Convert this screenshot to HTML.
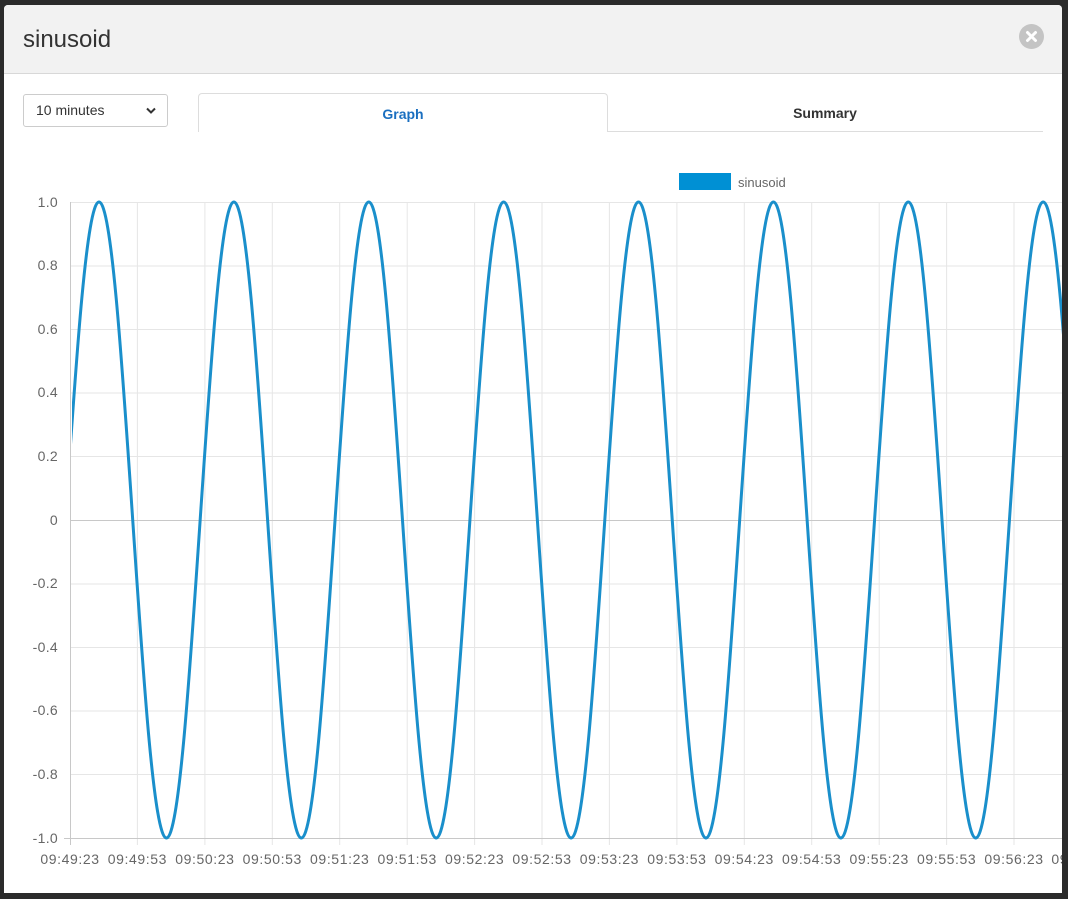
<!DOCTYPE html>
<html><head><meta charset="utf-8"><style>
html,body{margin:0;padding:0;width:1068px;height:899px;background:#2b2b2b;overflow:hidden;font-family:"Liberation Sans",sans-serif}
.modal{position:absolute;left:4px;top:5px;width:1058px;height:888px;background:#fff;border-radius:4px 4px 0 0;overflow:hidden}
.hdr{position:absolute;left:0;top:0;width:100%;height:68px;background:#f2f2f2;border-bottom:1px solid #d8d8d8}
.title{position:absolute;left:19px;top:21px;font-size:24px;color:#333}
.close{position:absolute;left:1015px;top:19px;width:25px;height:25px;border-radius:50%;background:#c4c4c4}
.sel{position:absolute;left:19px;top:89px;font-size:14px;color:#333;line-height:31px;padding-left:12px;box-sizing:border-box;width:145px;height:33px;border:1px solid #ccc;border-radius:3px}
.tab{position:absolute;top:88px;height:38px;font-size:14px;font-weight:bold;text-align:center;line-height:40px}
</style></head><body>
<div class="modal">
<div class="hdr"><div class="title">sinusoid</div>
<div class="close"><svg width="25" height="25"><path d="M8.5 8.5L16.5 16.5M16.5 8.5L8.5 16.5" stroke="#fff" stroke-width="3" stroke-linecap="round"/></svg></div></div>
<div class="sel">10 minutes<svg style="position:absolute;left:122px;top:12px" width="10" height="8"><path d="M1 1.5L5 5.5L9 1.5" stroke="#333" stroke-width="2" fill="none"/></svg></div>
<div class="tab" style="left:194px;width:408px;border:1px solid #ddd;border-bottom:none;border-radius:4px 4px 0 0;color:#1a6fc0;background:#fff">Graph</div>
<div class="tab" style="left:603px;width:436px;border-bottom:1px solid #ddd;color:#333">Summary</div>
</div>
<svg style="position:absolute;left:0;top:0" width="1068" height="899">
<defs><clipPath id="c"><rect x="72" y="190" width="990" height="660"/></clipPath></defs>
<g stroke="#e6e6e6" stroke-width="1">
<path d="M70 202.5H1062M70 266H1062M70 329.5H1062M70 393H1062M70 456.5H1062M70 584H1062M70 647.5H1062M70 711H1062M70 774.5H1062"/>
<path d="M137.4 202V845M204.9 202V845M272.3 202V845M339.7 202V845M407.2 202V845M474.6 202V845M542 202V845M609.4 202V845M676.9 202V845M744.3 202V845M811.7 202V845M879.2 202V845M946.6 202V845M1014 202V845"/>
</g>
<path d="M70 520.5H1062M64 838.5H1062M70.5 202V845" stroke="#c8c8c8" stroke-width="1"/>
<g fill="#666" font-size="14" text-anchor="end" letter-spacing="0.3">
<text x="58" y="207">1.0</text><text x="58" y="270">0.8</text><text x="58" y="334">0.6</text><text x="58" y="397">0.4</text><text x="58" y="461">0.2</text><text x="58" y="525">0</text><text x="58" y="588">-0.2</text><text x="58" y="652">-0.4</text><text x="58" y="715">-0.6</text><text x="58" y="779">-0.8</text><text x="58" y="843">-1.0</text>
</g>
<g fill="#666" font-size="14" text-anchor="middle" letter-spacing="0.6">
<text x="70" y="864">09:49:23</text><text x="137.4" y="864">09:49:53</text><text x="204.9" y="864">09:50:23</text><text x="272.3" y="864">09:50:53</text><text x="339.7" y="864">09:51:23</text><text x="407.2" y="864">09:51:53</text><text x="474.6" y="864">09:52:23</text><text x="542" y="864">09:52:53</text><text x="609.4" y="864">09:53:23</text><text x="676.9" y="864">09:53:53</text><text x="744.3" y="864">09:54:23</text><text x="811.7" y="864">09:54:53</text><text x="879.2" y="864">09:55:23</text><text x="946.6" y="864">09:55:53</text><text x="1014" y="864">09:56:23</text><text x="1081" y="864">09:56:53</text>
</g>
<rect x="679" y="173" width="52" height="17" fill="#0090d4"/>
<text x="738" y="187" fill="#666" font-size="13">sinusoid</text>
<path clip-path="url(#c)" fill="none" stroke="#1a8fcb" stroke-width="3" d="M65.28 520
c11.27,-167 21.56,-318 33.72,-318 c12.16,0 22.45,151 33.72,318 c11.27,167 21.56,318 33.72,318 c12.16,0 22.45,-151 33.72,-318
c11.27,-167 21.56,-318 33.72,-318 c12.16,0 22.45,151 33.72,318 c11.27,167 21.56,318 33.72,318 c12.16,0 22.45,-151 33.72,-318
c11.27,-167 21.56,-318 33.72,-318 c12.16,0 22.45,151 33.72,318 c11.27,167 21.56,318 33.72,318 c12.16,0 22.45,-151 33.72,-318
c11.27,-167 21.56,-318 33.72,-318 c12.16,0 22.45,151 33.72,318 c11.27,167 21.56,318 33.72,318 c12.16,0 22.45,-151 33.72,-318
c11.27,-167 21.56,-318 33.72,-318 c12.16,0 22.45,151 33.72,318 c11.27,167 21.56,318 33.72,318 c12.16,0 22.45,-151 33.72,-318
c11.27,-167 21.56,-318 33.72,-318 c12.16,0 22.45,151 33.72,318 c11.27,167 21.56,318 33.72,318 c12.16,0 22.45,-151 33.72,-318
c11.27,-167 21.56,-318 33.72,-318 c12.16,0 22.45,151 33.72,318 c11.27,167 21.56,318 33.72,318 c12.16,0 22.45,-151 33.72,-318
c11.27,-167 21.56,-318 33.72,-318 c12.16,0 22.45,151 33.72,318"/>
</svg>
<div style="position:absolute;left:1062px;top:0;width:6px;height:899px;background:#2b2b2b"></div>
<div style="position:absolute;left:0;top:893px;width:1068px;height:6px;background:#2b2b2b"></div>
</body></html>
